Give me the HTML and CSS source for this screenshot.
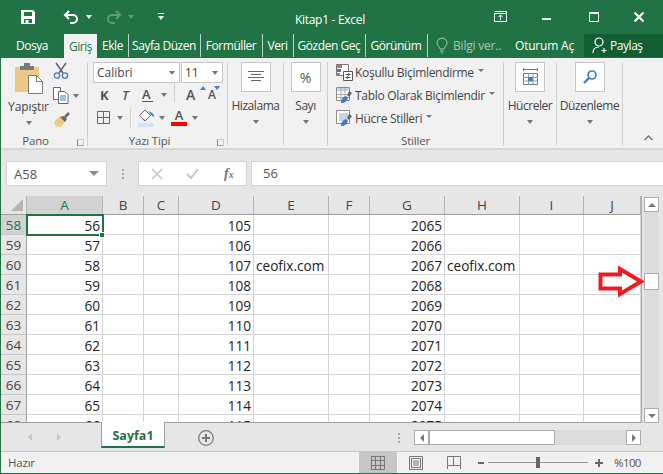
FILE: index.html
```html
<!DOCTYPE html>
<html lang="tr">
<head>
<meta charset="utf-8">
<title>Kitap1 - Excel</title>
<link rel="stylesheet" href="styles.css">
</head>
<body>
<div class="app">
  <header class="titlebar">
    <div class="qat">
      <svg class="q-save" width="16" height="16" viewBox="0 0 16 16"><path fill="#fff" fill-rule="evenodd" d="M1 1h12l2 2v12H1zM4 3v4h8V3zM4 10v4h1.500v-3h3v3H12v-4z"/></svg>
      <svg class="q-undo" width="16" height="14" viewBox="0 0 16 14"><path fill="none" stroke="#fff" stroke-width="2" d="M2 5h8a4 4 0 0 1 0 8H7M6 1L2 5l4 4"/></svg>
      <span class="caret white q-c1"></span>
      <svg class="q-redo" width="16" height="14" viewBox="0 0 16 14"><path fill="none" stroke="#5d9a78" stroke-width="2" d="M14 5H6a4 4 0 0 0 0 8h3M10 1l4 4-4 4"/></svg>
      <span class="caret dim q-c2"></span>
      <span class="q-custom"><i></i><span class="caret white"></span></span>
    </div>
    <div class="doc-title">Kitap1 - Excel</div>
    <div class="winctl">
      <svg class="w-disp" width="14" height="11" viewBox="0 0 14 11"><path fill="none" stroke="#fff" d="M.5 2.500h12v8H.5zM.5.500h12v2M6.500 9V4M4.500 6l2-2 2 2"/></svg>
      <svg class="w-min" width="10" height="3" viewBox="0 0 10 3"><path fill="#fff" d="M0 0h9v2H0z"/></svg>
      <svg class="w-max" width="10" height="10" viewBox="0 0 10 10"><path fill="none" stroke="#fff" d="M.5 1.500h9v8h-9z"/><path fill="#fff" d="M0 0h10v2H0z"/></svg>
      <svg class="w-close" width="10" height="10" viewBox="0 0 10 10"><path fill="none" stroke="#fff" stroke-width="2" d="M.5.500l9 9M9.500.500l-9 9"/></svg>
    </div>
  </header>

  <nav class="tabs">
    <div class="tab">Dosya</div>
    <div class="tab active">Giriş</div>
    <div class="tab">Ekle</div>
    <div class="tab sep">Sayfa Düzen</div>
    <div class="tab sep">Formüller</div>
    <div class="tab sep">Veri</div>
    <div class="tab sep">Gözden Geç</div>
    <div class="tab sep">Görünüm</div>
    <div class="tab sep help">
      <svg width="12" height="17" viewBox="0 0 12 17"><path fill="none" stroke="#a5c7b3" d="M6 1a5 5 0 0 1 3 9c-.6.500-1 1-1 2H4c0-1-.4-1.500-1-2a5 5 0 0 1 3-9zM4 14h4M5 16h2"/></svg>
      <span>Bilgi ver..</span>
    </div>
    <div class="tab signin">Oturum Aç</div>
    <div class="tab share">
      <svg width="16" height="17" viewBox="0 0 16 17"><circle cx="7" cy="5" r="4" fill="none" stroke="#fff" stroke-width="1.200"/><path fill="none" stroke="#fff" stroke-width="1.200" d="M1 16c0-4 2-6 6-6M12 11v5M9.500 13.500h5"/></svg>
      <span>Paylaş</span>
    </div>
  </nav>

  <section class="ribbon">
    <div class="group g-pano">
      <div class="g-body pano-body">
        <div class="paste">
          <svg class="paste-icon" width="30" height="32" viewBox="0 0 30 32"><path fill="#edc987" d="M1 4h24v25H1z"/><path fill="#7b7b7b" d="M6 3h4V0h6v3h4v4H6z"/><path fill="#fff" stroke="#7a7a7a" d="M14.500 12.500h8l6 6v12h-14z"/><path fill="none" stroke="#7a7a7a" d="M22.500 12.500v6h6"/></svg>
          <span class="big-label">Yapıştır</span>
          <span class="caret"></span>
        </div>
        <div class="pano-tools">
          <svg width="16" height="17" viewBox="0 0 16 17"><path fill="none" stroke="#666" stroke-width="1.500" d="M3 1l7 10M13 1L6 11"/><circle cx="4" cy="13.500" r="2.700" fill="none" stroke="#3f7fc1" stroke-width="1.300"/><circle cx="12" cy="13.500" r="2.700" fill="none" stroke="#3f7fc1" stroke-width="1.300"/></svg>
          <div class="tool-row">
            <svg width="16" height="17" viewBox="0 0 16 17"><path fill="#fff" stroke="#666" d="M.5.500h7v12h-7z"/><path fill="#fff" stroke="#666" d="M5.500 4.500h6l3.500 3v9H5.500z"/><path stroke="#3f7fc1" d="M7 9h6M7 11h6M7 13h6"/></svg>
            <span class="caret"></span>
          </div>
          <svg width="18" height="16" viewBox="0 0 18 16"><path fill="#edc987" d="M1 10l6-6 5 5-4 6H5l-1-1-1 1z"/><path fill="#666" d="M7 5l5 5 2-3-3-3z"/><path stroke="#666" stroke-width="2.500" d="M12 5l4-4"/></svg>
        </div>
      </div>
      <div class="g-label lbl-pano">Pano<span class="launcher"></span></div>
    </div>

    <div class="group g-font">
      <div class="g-body font-body">
        <div class="combo-row">
          <div class="combo c-name"><span>Calibri</span><span class="caret"></span></div>
          <div class="combo c-size"><span>11</span><span class="caret"></span></div>
        </div>
        <div class="fmt-row">
          <span class="f-bold">K</span>
          <span class="f-ital">T</span>
          <span class="f-und">A</span>
          <span class="caret f-c1"></span>
          <span class="f-div"></span>
          <span class="f-grow">A<i class="mini up"></i></span>
          <span class="f-shrink">A<i class="mini down"></i></span>
        </div>
        <div class="fmt-row row3">
          <svg width="14" height="14" viewBox="0 0 14 14"><path fill="none" stroke="#666" d="M.5.500h12v12H.500zM6.500.500v12M.5 6.500h12"/></svg>
          <span class="caret r3-c1"></span>
          <span class="f-div short"></span>
          <svg class="fill-icon" width="17" height="18" viewBox="0 0 17 18"><path fill="#fff" stroke="#666" d="M7 1l5.500 5.500L7 12 1.500 6.500z"/><path fill="#3f7fc1" d="M10 2c4 1 6 3 6 6l-2-1z"/><path fill="#d5e4f2" d="M0 14h16v4H0z"/></svg>
          <span class="caret r3-c2"></span>
          <span class="f-color">A</span>
          <span class="caret r3-c3"></span>
        </div>
      </div>
      <div class="g-label lbl-font">Yazı Tipi<span class="launcher"></span></div>
    </div>

    <div class="group g-hiz">
      <div class="big-btn">
        <span class="icon-box"><svg width="16" height="12" viewBox="0 0 16 12"><path stroke="#666" d="M0 .5h16M3 3.500h10M0 6.500h16M3 9.500h10"/></svg></span>
        <span class="big-label">Hizalama</span>
        <span class="caret"></span>
      </div>
    </div>

    <div class="group g-sayi">
      <div class="big-btn">
        <span class="icon-box pct">%</span>
        <span class="big-label">Sayı</span>
        <span class="caret"></span>
      </div>
    </div>

    <div class="group g-stil">
      <div class="g-body stil-body">
        <div class="stil-row">
          <svg width="17" height="17" viewBox="0 0 17 17"><path fill="#fff" stroke="#777" d="M.5.500h12v11H.5z"/><path fill="#e0694f" d="M1 1h5v3H1z"/><path fill="#3f7fc1" d="M1 5h4v3H1z"/><path fill="#e0694f" d="M1 9h3v2H1z"/><path fill="#fff" stroke="#555" d="M7.500 7.500h9v9h-9z"/><path stroke="#555" d="M9.500 10.500h5M9.500 13.500h5M13 9l-2 6"/></svg>
          <span>Koşullu Biçimlendirme</span><span class="caret tiny"></span>
        </div>
        <div class="stil-row">
          <svg width="17" height="17" viewBox="0 0 17 17"><path fill="#fff" stroke="#8a8a8a" d="M.5.500h13v13H.5z"/><path fill="#c3d5e8" d="M1 1h12v3H1z"/><path stroke="#aaa" d="M5 1v12M9 1v12M1 7.500h12M1 10.500h12"/><path fill="#666" d="M13 4l3 2-3 4-2-2z"/><path fill="#3f7fc1" d="M5 16c0-4 2-6 5-7l2 2c-1 3-3 5-7 5z"/></svg>
          <span>Tablo Olarak Biçimlendir</span><span class="caret tiny"></span>
        </div>
        <div class="stil-row">
          <svg width="17" height="17" viewBox="0 0 17 17"><path fill="#fff" stroke="#8a8a8a" d="M.5.500h13v13H.5z"/><path fill="#c3d5e8" d="M3 3h9v8H3z"/><path fill="#666" d="M13 4l3 2-3 4-2-2z"/><path fill="#3f7fc1" d="M5 16c0-4 2-6 5-7l2 2c-1 3-3 5-7 5z"/></svg>
          <span>Hücre Stilleri</span><span class="caret tiny"></span>
        </div>
      </div>
      <div class="g-label">Stiller</div>
    </div>

    <div class="group g-huc">
      <div class="big-btn">
        <span class="icon-box"><svg width="15" height="18" viewBox="0 0 15 18"><path stroke="#3f7fc1" d="M0 1.500h15M.5 0v3M14.500 0v3"/><path fill="#fff" stroke="#777" d="M.5 5.500h14v11H.5z"/><path stroke="#999" d="M5.500 5v12M10 5v12M0 9.500h15M0 13h15"/><path fill="#3f7fc1" d="M5 9h5v4H5z"/></svg></span>
        <span class="big-label">Hücreler</span>
        <span class="caret"></span>
      </div>
    </div>

    <div class="group g-duz">
      <div class="big-btn">
        <span class="icon-box"><svg width="14" height="14" viewBox="0 0 14 14"><circle cx="9" cy="5" r="4" fill="none" stroke="#3f7fc1" stroke-width="1.700"/><path stroke="#3f7fc1" stroke-width="2.400" d="M6 8l-5 5"/></svg></span>
        <span class="big-label">Düzenleme</span>
        <span class="caret"></span>
      </div>
    </div>

    <div class="collapse"><svg width="9" height="6" viewBox="0 0 9 6"><path fill="none" stroke="#777" stroke-width="1.500" d="M.5 5l4-4 4 4"/></svg></div>
  </section>

  <section class="formula">
    <div class="namebox"><span>A58</span><span class="caret wide"></span></div>
    <div class="dots"><i></i><i></i><i></i></div>
    <div class="fx-box">
      <svg width="12" height="12" viewBox="0 0 12 12"><path stroke="#c6c6c6" stroke-width="1.600" fill="none" d="M1 1l10 10M11 1L1 11"/></svg>
      <svg width="13" height="11" viewBox="0 0 13 11"><path stroke="#c6c6c6" stroke-width="2" fill="none" d="M1 6l4 4 7-9"/></svg>
      <span class="fx">f<small>x</small></span>
    </div>
    <div class="f-input">56</div>
  </section>

  <section class="sheet">
    <div class="grid-wrap">
      <table class="grid">
        <colgroup>
          <col class="c-h"><col class="c-a"><col class="c-b"><col class="c-c"><col class="c-d"><col class="c-e"><col class="c-f"><col class="c-g"><col class="c-hh"><col class="c-i"><col class="c-j">
        </colgroup>
        <thead>
          <tr><th class="corner"><i></i></th><th class="sel">A</th><th>B</th><th>C</th><th>D</th><th>E</th><th>F</th><th>G</th><th>H</th><th>I</th><th>J</th></tr>
        </thead>
        <tbody>
          <tr><th class="sel">58</th><td class="num active-cell">56<i></i></td><td></td><td></td><td class="num">105</td><td></td><td></td><td class="num">2065</td><td></td><td></td><td></td></tr>
          <tr><th>59</th><td class="num">57</td><td></td><td></td><td class="num">106</td><td></td><td></td><td class="num">2066</td><td></td><td></td><td></td></tr>
          <tr><th>60</th><td class="num">58</td><td></td><td></td><td class="num">107</td><td>ceofix.com</td><td></td><td class="num">2067</td><td>ceofix.com</td><td></td><td></td></tr>
          <tr><th>61</th><td class="num">59</td><td></td><td></td><td class="num">108</td><td></td><td></td><td class="num">2068</td><td></td><td></td><td></td></tr>
          <tr><th>62</th><td class="num">60</td><td></td><td></td><td class="num">109</td><td></td><td></td><td class="num">2069</td><td></td><td></td><td></td></tr>
          <tr><th>63</th><td class="num">61</td><td></td><td></td><td class="num">110</td><td></td><td></td><td class="num">2070</td><td></td><td></td><td></td></tr>
          <tr><th>64</th><td class="num">62</td><td></td><td></td><td class="num">111</td><td></td><td></td><td class="num">2071</td><td></td><td></td><td></td></tr>
          <tr><th>65</th><td class="num">63</td><td></td><td></td><td class="num">112</td><td></td><td></td><td class="num">2072</td><td></td><td></td><td></td></tr>
          <tr><th>66</th><td class="num">64</td><td></td><td></td><td class="num">113</td><td></td><td></td><td class="num">2073</td><td></td><td></td><td></td></tr>
          <tr><th>67</th><td class="num">65</td><td></td><td></td><td class="num">114</td><td></td><td></td><td class="num">2074</td><td></td><td></td><td></td></tr>
          <tr class="partial"><th>68</th><td class="num">66</td><td></td><td></td><td class="num">115</td><td></td><td></td><td class="num">2075</td><td></td><td></td><td></td></tr>
        </tbody>
      </table>
    </div>
    <div class="vscroll">
      <div class="sb-btn"><span class="tri t-up"></span></div>
      <div class="v-track"><div class="v-thumb"></div></div>
      <div class="sb-btn"><span class="tri t-down"></span></div>
    </div>
    <svg class="red-arrow" width="47" height="33" viewBox="0 0 47 33"><path fill="#fff" stroke="#ed1c24" stroke-width="4" d="M2.500 9.500H22V4l21 12.500L22 29v-5.500H2.500z"/></svg>
  </section>

  <section class="sheetbar">
    <div class="nav-arrows"><span class="tri t-left light"></span><span class="tri t-right light"></span></div>
    <div class="sheet-tab">Sayfa1</div>
    <svg class="add" width="16" height="16" viewBox="0 0 16 16"><circle cx="8" cy="8" r="7.300" fill="none" stroke="#777" stroke-width="1.200"/><path stroke="#777" stroke-width="2" d="M8 4v8M4 8h8"/></svg>
    <div class="dots h-dots"><i></i><i></i><i></i></div>
    <div class="hscroll">
      <div class="sb-btn h"><span class="tri t-left"></span></div>
      <div class="h-thumb"></div>
      <div class="h-track"></div>
      <div class="sb-btn h"><span class="tri t-right"></span></div>
    </div>
  </section>

  <footer class="status">
    <span class="ready">Hazır</span>
    <div class="views">
      <span class="view on"><svg width="14" height="14" viewBox="0 0 14 14"><path fill="none" stroke="#777" d="M.5.500h13v13H.5zM4.500.500v13M9.500.500v13M.5 4.500h13M.5 9.500h13"/></svg></span>
      <span class="view"><svg width="14" height="14" viewBox="0 0 14 14"><path fill="none" stroke="#777" d="M.5.500h13v13H.5zM2.500 2.500h9v9h-9zM4 5h6M4 7h6M4 9h6"/></svg></span>
      <span class="view"><svg width="14" height="14" viewBox="0 0 14 14"><path fill="none" stroke="#777" d="M.5 13V.5h13V13M.5 9.500h13M6.500.5v9" /></svg></span>
    </div>
    <div class="zoom">
      <span class="z-minus"></span>
      <div class="z-track"><i></i></div>
      <span class="z-plus"></span>
      <span class="z-val">%100</span>
    </div>
  </footer>
</div>
</body>
</html>
```

FILE: styles.css
```css
* { box-sizing: border-box; }
html, body { margin: 0; padding: 0; }
body { width: 663px; height: 474px; overflow: hidden; background: #e6e6e6; font-family: "Open Sans", "Noto Sans", sans-serif; color: #444; }
.app { width: 663px; height: 474px; display: flex; flex-direction: column; border-left: 1px solid #217346; border-bottom: 1px solid #217346; }

/* caret */
.caret { display: inline-block; width: 0; height: 0; border-left: 3.5px solid transparent; border-right: 3.5px solid transparent; border-top: 4px solid #777; flex: none; }
.caret.white { border-top-color: #fff; }
.caret.dim { border-top-color: #5d9a78; }
.caret.tiny { border-left-width: 3px; border-right-width: 3px; border-top-width: 3px; margin: 0 0 4px 2px; align-self: center; }
.caret.wide { border-left-width: 5px; border-right-width: 5px; border-top-width: 5px; border-top-color: #8a8a8a; }

/* title bar */
.titlebar { height: 33px; margin-left: -1px; background: #217346; display: flex; align-items: center; color: #fff; position: relative; flex: none; }
.qat { display: flex; align-items: center; padding-left: 20px; width: 295px; height: 30px; }
.q-save { margin-right: 27px; }
.q-undo { margin-right: 7px; }
.q-c1 { margin-right: 14px; }
.q-redo { margin-right: 6px; }
.q-c2 { margin-right: 24px; }
.q-custom { display: flex; flex-direction: column; align-items: center; gap: 2px; }
.q-custom i { display: block; width: 6px; height: 1px; background: #fff; }
.doc-title { width: 74px; font-size: 12px; letter-spacing: -.3px; white-space: nowrap; padding-top: 5px; }
.winctl { display: flex; align-items: center; margin-left: 125px; height: 30px; }
.w-disp { margin-right: 34px; }
.w-min { margin-right: 37px; margin-top: 5px; }
.w-max { margin-right: 35px; }

/* tabs */
.tabs { height: 25px; margin-left: -1px; background: #217346; display: grid; grid-template-columns: 64px 33px 31px 72px 62px 31px 72px 62px 83px 74px 79px; color: #fff; font-size: 12px; letter-spacing: -.45px; flex: none; }
.tab { display: flex; align-items: center; justify-content: center; white-space: nowrap; position: relative; }
.tab.sep::before { content: ""; position: absolute; left: 0; top: 1px; height: 23px; width: 1px; background: #b8d2c3; }
.tab.active { background: #f1f1f1; color: #217346; margin-top: 1px; }
.help { gap: 5px; color: #a5c7b3; justify-content: flex-start; padding-left: 9px; letter-spacing: -.2px; }
.signin { justify-content: flex-start; padding-left: 5px; letter-spacing: -.2px; }
.share { background: #105e32; gap: 2px; height: 23px; justify-content: flex-start; padding-left: 8px; margin-top: 1px; }

/* ribbon */
.ribbon { height: 92px; background: #f1f1f1; border-bottom: 2px solid #d6d6d6; display: flex; padding-top: 4px; flex: none; }
.group { position: relative; height: 84px; border-right: 1px solid #d0d0d0; display: flex; flex-direction: column; }
.g-pano { width: 87px; }
.g-font { width: 140px; }
.g-hiz { width: 56px; }
.g-sayi { width: 44px; }
.g-stil { width: 176px; }
.g-huc { width: 53px; }
.g-duz { width: 66px; }
.g-body { flex: 1; min-height: 0; }
.g-label { height: 13px; font-size: 11.5px; letter-spacing: -.2px; text-align: center; color: #555; line-height: 16px; position: relative; flex: none; }
.lbl-pano { padding-right: 17px; }
.lbl-font { padding-right: 16px; }
.launcher { position: absolute; right: 3px; top: 6px; width: 7px; height: 7px; border-left: 1px solid #888; border-bottom: 1px solid #aaa; border-top: 1px solid #ccc; border-right: 1px solid #ccc; }

.big-label { font-size: 12px; letter-spacing: -.45px; color: #444; white-space: nowrap; line-height: 16px; }
.big-btn { display: flex; flex-direction: column; align-items: center; }
.big-btn .big-label { margin-top: 6px; }
.big-btn .caret { margin-top: 6px; }
.icon-box { width: 30px; height: 30px; background: #fff; border: 1px solid #c6c6c6; display: flex; align-items: center; justify-content: center; }
.pct { font-size: 14px; color: #555; letter-spacing: 0; }

.pano-body { display: flex; padding-left: 7px; }
.paste { width: 41px; display: flex; flex-direction: column; align-items: center; padding-top: 1px; }
.paste .big-label { margin-top: 4px; letter-spacing: -.1px; }
.paste .caret { margin-top: 6px; }
.pano-tools { display: flex; flex-direction: column; gap: 8px; padding-left: 4px; }
.tool-row { display: flex; align-items: center; gap: 4px; }

.font-body { padding: 0 0 0 5px; }
.combo-row { display: flex; gap: 1px; }
.combo { height: 21px; background: #fff; border: 1px solid #c6c6c6; display: flex; align-items: center; justify-content: space-between; padding: 0 4px 0 3px; font-size: 12px; color: #444; }
.c-name { width: 87px; }
.c-size { width: 42px; }
.fmt-row { display: flex; align-items: center; height: 21px; margin-top: 1px; padding-left: 7px; font-size: 13px; color: #555; }
.f-bold { font-weight: 700; width: 22px; }
.f-ital { font-style: italic; font-weight: 600; width: 20px; }
.f-und { font-weight: 600; border-bottom: 1.500px solid #555; line-height: 14px; width: 11px; }
.f-c1 { margin-left: 8px; }
.f-div { width: 1px; height: 20px; background: #d0d0d0; margin-left: 7px; margin-top: -6px; }
.f-grow { margin-left: 11px; font-size: 14px; position: relative; width: 22px; font-weight: 600; }
.f-shrink { font-size: 12px; position: relative; font-weight: 600; }
.mini { position: absolute; top: 1px; right: 2px; width: 0; height: 0; border-left: 3px solid transparent; border-right: 3px solid transparent; }
.mini.up { border-bottom: 4px solid #3f7fc1; }
.mini.down { border-top: 4px solid #3f7fc1; right: -4px; top: 0; }
.row3 { padding-left: 4px; margin-top: 2px; }
.r3-c1 { margin-left: 6px; }
.f-div.short { height: 20px; margin: 0 7px 0 7px; }
.r3-c2 { margin-left: 4px; }
.f-color { margin-left: 6px; width: 16px; text-align: center; font-weight: 600; font-size: 13px; line-height: 13px; border-bottom: 4px solid #f00; }
.r3-c3 { margin-left: 5px; }

.stil-body { padding-left: 8px; display: flex; flex-direction: column; gap: 7px; padding-top: 2px; }
.stil-row { display: flex; align-items: center; gap: 2px; font-size: 12px; letter-spacing: -.3px; height: 16px; white-space: nowrap; color: #444; }
.collapse { flex: 1; display: flex; align-items: flex-end; justify-content: flex-end; padding: 0 10px 7px 0; }

/* formula bar */
.formula { height: 46px; background: #e6e6e6; display: flex; align-items: flex-start; padding: 11px 0 0 5px; flex: none; }
.namebox { width: 101px; height: 25px; background: #fff; border: 1px solid #d4d4d4; display: flex; align-items: center; justify-content: space-between; padding: 0 7px; font-size: 13px; color: #555; }
.dots { display: flex; flex-direction: column; gap: 2px; width: 31px; align-items: center; height: 25px; justify-content: center; }
.dots i { width: 2px; height: 2px; background: #aaa; display: block; }
.fx-box { width: 109px; height: 25px; background: #fff; border: 1px solid #d4d4d4; display: flex; align-items: center; padding-left: 12px; gap: 23px; }
.fx { font-family: "Liberation Serif", serif; font-style: italic; font-weight: 700; color: #777; font-size: 14px; margin-left: 2px; }
.fx small { font-size: 10px; }
.f-input { flex: 1; height: 25px; margin-left: 4px; background: #fff; border: 1px solid #d4d4d4; border-right: 0; padding-left: 11px; font-size: 13px; line-height: 23px; color: #555; }

/* sheet */
.sheet { height: 227px; position: relative; display: flex; flex: none; }
.grid-wrap { width: 641px; height: 227px; overflow: hidden; background: #fff; border-right: 1px solid #ababab; border-bottom: 1px solid #9e9e9e; flex: none; }
.grid { border-collapse: separate; border-spacing: 0; table-layout: fixed; width: 640px; background: #fff; }
.c-h { width: 26px; } .c-a { width: 76px; } .c-b { width: 41px; } .c-c { width: 35px; } .c-d { width: 75px; } .c-e { width: 75px; } .c-f { width: 41px; } .c-g { width: 75px; } .c-hh { width: 75px; } .c-i { width: 64px; } .c-j { width: 57px; }
.grid th { background: #e6e6e6; font-weight: 400; font-size: 13.500px; line-height: 17px; color: #444; padding: 0; border-right: 1px solid #b5b5b5; border-bottom: 1px solid #c8c8c8; text-align: center; }
.grid thead th { height: 19px; border-bottom: 1px solid #9f9f9f; }
.grid tbody th { height: 20px; border-right: 1px solid #9f9f9f; padding-top: 2px; }
.grid th.sel { background: #d2d2d2; color: #217346; }
.corner { position: relative; }
.corner i { position: absolute; right: 3px; bottom: 3px; width: 0; height: 0; border-left: 12px solid transparent; border-bottom: 12px solid #b5b5b5; }
.grid td { height: 20px; padding: 2px 2px 0; font-size: 13.600px; line-height: 17px; color: #222; border-right: 1px solid #d4d4d4; border-bottom: 1px solid #d4d4d4; white-space: nowrap; overflow: visible; }
.grid td.num { text-align: right; padding-right: 2px; }
.active-cell { position: relative; outline: 2px solid #217346; outline-offset: -1px; }
.active-cell i { position: absolute; right: -3px; bottom: -4px; background: #217346; border: 1px solid #fff; box-sizing: content-box; width: 4px; height: 4px; }

.vscroll { flex: 1; display: flex; flex-direction: column; align-items: center; padding: 1px 4px 0 2px; }
.sb-btn { width: 15px; height: 15px; flex: none; background: #fff; border: 1px solid #ababab; display: flex; align-items: center; justify-content: center; }
.v-track { width: 15px; flex: 1; background: #dcdcdc; padding-top: 61px; }
.v-thumb { width: 15px; height: 17px; background: #fff; border: 1px solid #ababab; }
.tri { display: block; width: 0; height: 0; }
.t-up { border-left: 4px solid transparent; border-right: 4px solid transparent; border-bottom: 4px solid #777; }
.t-down { border-left: 4px solid transparent; border-right: 4px solid transparent; border-top: 4px solid #777; }
.t-left { border-top: 4px solid transparent; border-bottom: 4px solid transparent; border-right: 4px solid #777; }
.t-right { border-top: 4px solid transparent; border-bottom: 4px solid transparent; border-left: 4px solid #777; }
.t-left.light { border-right-color: #c4c4c4; }
.t-right.light { border-left-color: #c4c4c4; }
.red-arrow { position: absolute; left: 597px; top: 69px; }

/* sheet bar */
.sheetbar { height: 29px; background: #e6e6e6; border-bottom: 1px solid #c6c6c6; display: flex; align-items: flex-start; flex: none; position: relative; }
.nav-arrows { width: 100px; height: 27px; display: flex; align-items: center; gap: 25px; padding-left: 27px; }
.sheet-tab { width: 64px; height: 26px; background: #fff; border-left: 1px solid #9e9e9e; border-right: 1px solid #9e9e9e; border-bottom: 2px solid #217346; color: #217346; font-weight: 700; font-size: 12.500px; line-height: 28px; text-align: center; margin-top: -1px; position: relative; }
.add { margin: 7px 0 0 33px; flex: none; }
.h-dots { height: 15px; width: 5px; margin: 7px 0 0 182px; flex: none; }
.hscroll { display: flex; margin: 7px 0 0 13px; width: 227px; height: 15px; flex: none; }
.sb-btn.h { width: 15px; }
.h-thumb { width: 126px; height: 15px; background: #fff; border: 1px solid #ababab; }
.h-track { flex: 1; height: 15px; background: #dcdcdc; }

/* status */
.status { flex: 1; background: #f1f1f1; display: flex; align-items: center; font-size: 11.500px; color: #555; }
.ready { width: 358px; padding-left: 7px; letter-spacing: -.2px; }
.views { display: flex; height: 100%; }
.view { width: 38px; display: flex; align-items: center; justify-content: center; }
.view.on { background: #c6c6c6; }
.zoom { display: flex; align-items: center; margin-left: 5px; }
.z-minus { width: 6px; height: 2px; background: #666; }
.z-track { width: 100px; height: 1px; background: #999; margin-left: 4px; position: relative; }
.z-track i { position: absolute; left: 48px; top: -5px; width: 4px; height: 11px; background: #666; }
.z-plus { width: 8px; height: 8px; margin-left: 7px; background: linear-gradient(#666,#666) center/8px 2px no-repeat, linear-gradient(#666,#666) center/2px 8px no-repeat; }
.z-val { margin-left: 11px; letter-spacing: -.6px; }
```
